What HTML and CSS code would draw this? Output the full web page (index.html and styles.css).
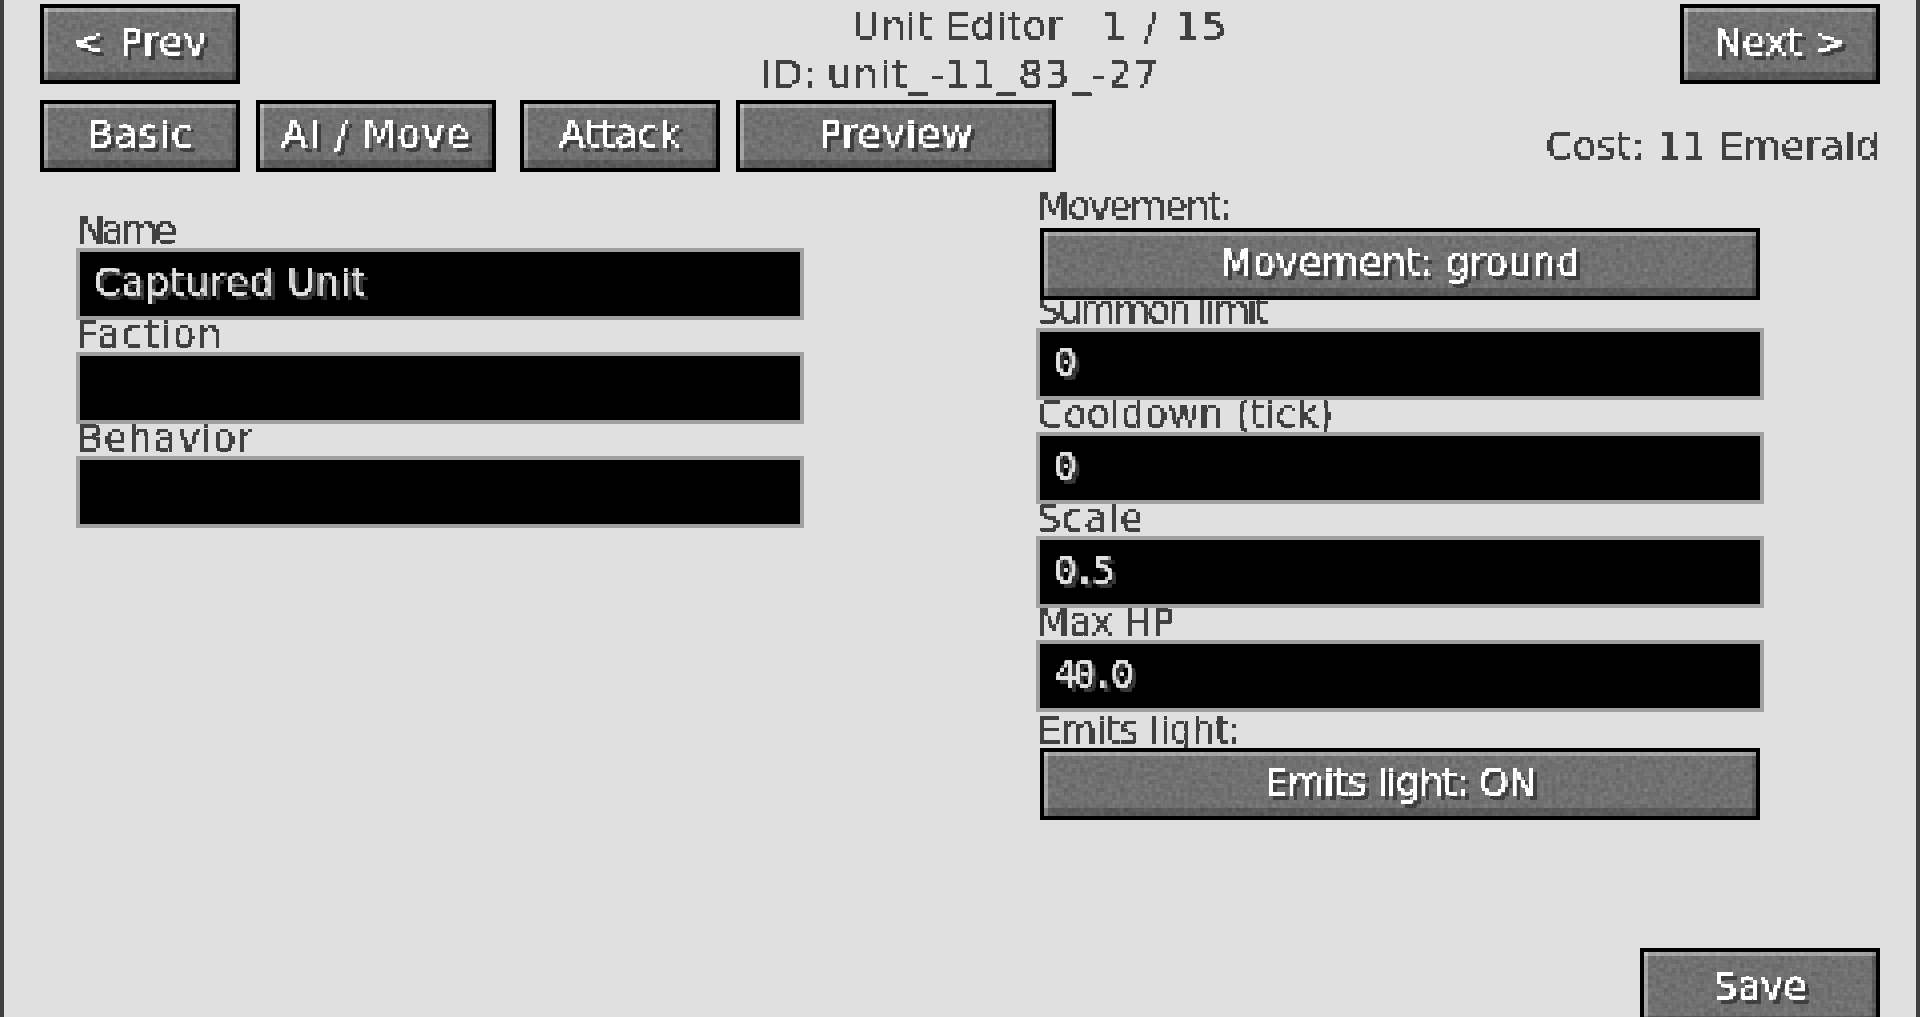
FILE: index.html
```html
<!DOCTYPE html>
<html lang="en">
<head>
    <meta charset="UTF-8">
    <title>Unit Editor</title>
    <link rel="stylesheet" href="styles.css">
</head>
<body>
    <!-- filters: blocky text and the stone texture of the buttons -->
    <svg class="defs" width="0" height="0" aria-hidden="true">
        <filter id="blocky" x="-5%" y="-30%" width="110%" height="170%" primitiveUnits="userSpaceOnUse" color-interpolation-filters="sRGB">
            <feComponentTransfer in="SourceGraphic" result="hard">
                <feFuncA type="discrete" tableValues="0 0 1 1"/>
            </feComponentTransfer>
            <feFlood x="1" y="1" width="2" height="2" flood-color="#000"/>
            <feComposite x="0" y="0" width="4" height="4" result="cell"/>
            <feTile in="cell" result="grid"/>
            <feComposite in="hard" in2="grid" operator="in"/>
            <feMorphology operator="dilate" radius="1"/>
        </filter>
        <filter id="stone" x="0" y="0" width="100%" height="100%" primitiveUnits="userSpaceOnUse" color-interpolation-filters="sRGB">
            <feTurbulence type="fractalNoise" baseFrequency="0.25" numOctaves="2" seed="4"/>
            <feColorMatrix type="matrix" values="0.15 0 0 0 0.36  0.15 0 0 0 0.36  0.15 0 0 0 0.36  0 0 0 0 1" result="noise"/>
            <feFlood x="1" y="1" width="2" height="2" flood-color="#000"/>
            <feComposite x="0" y="0" width="4" height="4" result="cell"/>
            <feTile in="cell" result="grid"/>
            <feComposite in="noise" in2="grid" operator="in"/>
            <feMorphology operator="dilate" radius="1"/>
        </filter>
    </svg>

    <div class="screen">
        <div class="top-row">
            <button class="btn btn-nav"><span class="txt sp-wide">&lt; Prev</span></button>
            <div class="title">
                <div class="title-main txt">Unit Editor   <span class="page-num">1 / 15</span></div>
                <div class="title-id txt">ID: unit_-11_83_-27</div>
            </div>
            <button class="btn btn-nav"><span class="txt">Next &gt;</span></button>
        </div>

        <div class="tab-row">
            <button class="btn tab-basic"><span class="txt sp-open">Basic</span></button>
            <button class="btn tab-ai"><span class="txt sp-wide">AI / Move</span></button>
            <button class="btn tab-attack"><span class="txt">Attack</span></button>
            <button class="btn tab-preview"><span class="txt sp-open">Preview</span></button>
            <div class="cost txt">Cost: 11 Emerald</div>
        </div>

        <div class="columns">
            <div class="col-left">
                <label class="label txt sp-name">Name</label>
                <input class="field field-text txt" value="Captured Unit">
                <label class="label txt sp-wide">Faction</label>
                <input class="field txt" value="">
                <label class="label txt sp-open">Behavior</label>
                <input class="field txt" value="">
            </div>
            <div class="col-right">
                <label class="label label-btn txt sp-tight">Movement:</label>
                <button class="btn btn-wide"><span class="txt">Movement: ground</span></button>
                <label class="label label-under txt sp-tighter">Summon limit</label>
                <input class="field field-num txt" value="0">
                <label class="label txt">Cooldown (tick)</label>
                <input class="field field-num txt" value="0">
                <label class="label txt sp-open">Scale</label>
                <input class="field field-num txt" value="0.5">
                <label class="label txt sp-close">Max HP</label>
                <input class="field field-num txt" value="40.0">
                <label class="label label-btn label-gap txt sp-close">Emits light:</label>
                <button class="btn btn-wide"><span class="txt sp-close">Emits light: ON</span></button>
            </div>
        </div>

        <div class="footer">
            <button class="btn btn-save"><span class="txt">Save</span></button>
        </div>
    </div>
</body>
</html>
```

FILE: styles.css
```css
html, body {
    margin: 0;
    padding: 0;
}
body {
    background: #e0e0e0;
    font-family: "DejaVu Sans", sans-serif;
    font-size: 38px;
    line-height: 28px;
    color: #404040;
    overflow: hidden;
}
.defs {
    position: absolute;
}
.txt {
    filter: url(#blocky);
}
.screen {
    box-sizing: border-box;
    width: 1920px;
    height: 1017px;
    padding: 4px 36px 0;
    border-left: 4px solid #404040;
    border-right: 4px solid #404040;
    overflow: hidden;
}

/* the pixel font has other widths, so spacing is set per text */
.sp-open { letter-spacing: 1px; }
.sp-wide { letter-spacing: 1.5px; }
.sp-close { letter-spacing: -1px; }
.sp-tight { letter-spacing: -2.3px; }
.sp-tighter { letter-spacing: -3px; }
.sp-name { letter-spacing: -4px; }

/* buttons */
.btn {
    position: relative;
    z-index: 1;
    box-sizing: border-box;
    display: flex;
    align-items: center;
    justify-content: center;
    height: 72px;
    padding: 0 0 4px;
    border: 4px solid #000;
    background: #6f6f6f;
    font: inherit;
    color: #fff;
}
.btn::before,
.btn::after {
    content: "";
    position: absolute;
    inset: 0;
}
.btn::before {
    background: #000;
    filter: url(#stone);
}
.btn::after {
    box-shadow: inset 0 -8px 0 rgba(0, 0, 0, 0.2),
                inset 0 4px 0 rgba(255, 255, 255, 0.36),
                inset 4px 0 0 rgba(255, 255, 255, 0.36),
                inset -4px 0 0 rgba(0, 0, 0, 0.2);
}
.btn .txt {
    position: relative;
    z-index: 1;
    display: block;
    text-shadow: 4px 4px 0 #3f3f3f;
}
.btn-nav {
    width: 200px;
    height: 80px;
    flex: none;
}
.btn-wide {
    width: 720px;
    margin-left: 4px;
}
.btn-save {
    width: 240px;
    height: 80px;
    flex: none;
}

/* header */
.top-row {
    display: flex;
    height: 80px;
}
.title {
    flex: 1;
    padding-top: 8px;
    text-align: center;
}
.title-main {
    padding-left: 162px;
    margin-bottom: 20px;
    white-space: pre;
    letter-spacing: 0.8px;
}
.page-num {
    letter-spacing: 3px;
}
.title-id {
    letter-spacing: 2px;
    word-spacing: -6px;
}
.tab-row {
    display: flex;
    margin-top: 16px;
}
.tab-basic {
    width: 200px;
}
.tab-ai {
    width: 240px;
    margin-left: 16px;
}
.tab-attack {
    width: 200px;
    margin-left: 24px;
}
.tab-preview {
    width: 320px;
    margin-left: 16px;
}
.cost {
    margin-left: auto;
    margin-top: 32px;
    letter-spacing: 0.4px;
}

/* form columns */
.columns {
    display: flex;
    align-items: flex-start;
}
.col-left {
    width: 728px;
    margin: 44px 0 0 36px;
}
.col-right {
    width: 728px;
    margin: 20px 0 0 232px;
}
.label {
    display: block;
    height: 32px;
    padding-left: 1px;
}
.label-btn {
    height: 36px;
}
.label-under {
    margin-top: -4px;
}
.label-gap {
    margin-top: 4px;
    height: 32px;
}
.field {
    display: block;
    box-sizing: border-box;
    width: 728px;
    height: 72px;
    padding: 0 0 4px 14px;
    border: 4px solid #a0a0a0;
    border-radius: 0;
    outline: none;
    background: #000;
    font: inherit;
    color: #e0e0e0;
    text-shadow: 4px 4px 0 #383838;
}
.field-text {
    letter-spacing: 0.6px;
}
.field-num {
    font-family: "DejaVu Sans Mono", monospace;
    letter-spacing: -4px;
}

.footer {
    display: flex;
    justify-content: flex-end;
    margin-top: 128px;
}
```
